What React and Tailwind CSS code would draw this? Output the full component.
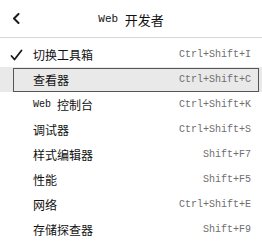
import React from "react";

const cjk = { fontFamily: '"Noto Sans CJK SC", "Noto Sans", sans-serif' };
const mono = { fontFamily: '"Liberation Mono", "DejaVu Sans Mono", monospace' };

const items = [
  { label: [["c", "切换工具箱"]], key: "Ctrl+Shift+I", checked: true },
  { label: [["c", "查看器"]], key: "Ctrl+Shift+C", focused: true },
  { label: [["m", "Web "], ["c", "控制台"]], key: "Ctrl+Shift+K" },
  { label: [["c", "调试器"]], key: "Ctrl+Shift+S" },
  { label: [["c", "样式编辑器"]], key: "Shift+F7" },
  { label: [["c", "性能"]], key: "Shift+F5" },
  { label: [["c", "网络"]], key: "Ctrl+Shift+E" },
  { label: [["c", "存储探查器"]], key: "Shift+F9" },
];

function Label({ parts }) {
  return (
    <span className="flex items-center text-[#111111]">
      {parts.map(([t, s], i) =>
        t === "m" ? (
          <span key={i} className="text-[10px] leading-none whitespace-pre" style={mono}>
            {s}
          </span>
        ) : (
          <span key={i} className="text-[12px] leading-none whitespace-pre" style={cjk}>
            {s}
          </span>
        )
      )}
    </span>
  );
}

export default function App() {
  return (
    <div className="w-[262px] h-[243px] bg-white overflow-hidden">
      <div className="h-[38px] flex items-center border-b border-[#d8d8d8]">
        <div className="w-[36px] pl-[12px] flex items-center">
          <svg width="8" height="11" viewBox="0 0 8 11" fill="none">
            <path d="M6.5 1 L2 5.5 L6.5 10" stroke="#1a1a1a" strokeWidth="2" strokeLinecap="round" strokeLinejoin="round" />
          </svg>
        </div>
        <div className="flex-1 flex items-center justify-center text-[#111111] pt-[1px]">
          <span className="text-[11px] leading-none whitespace-pre" style={mono}>Web </span>
          <span className="text-[13px] leading-none" style={cjk}>开发者</span>
        </div>
        <div className="w-[36px]" />
      </div>
      <div className="pt-[4px]">
        {items.map((it, i) => (
          <div
            key={i}
            className={
              "relative h-[25px] flex items-center " +
              (it.focused ? "bg-[#e9e9e9]" : "")
            }
          >
            {it.focused && (
              <div className="absolute left-[13px] right-[3px] top-[1px] bottom-0 border border-[#555555]" />
            )}
            <div className="w-[33px] pl-[10px] flex items-center">
              {it.checked && (
                <svg width="13" height="12" viewBox="0 0 13 12" fill="none">
                  <path d="M1.5 7 L4.5 10.5 L11.5 1.5" stroke="#1a1a1a" strokeWidth="1.8" strokeLinecap="round" strokeLinejoin="round" />
                </svg>
              )}
            </div>
            <div className="flex-1 flex items-center">
              <Label parts={it.label} />
            </div>
            <div className="pr-[11px] text-[10px] leading-none text-[#6e6e6e]" style={mono}>
              {it.key}
            </div>
          </div>
        ))}
      </div>
    </div>
  );
}
